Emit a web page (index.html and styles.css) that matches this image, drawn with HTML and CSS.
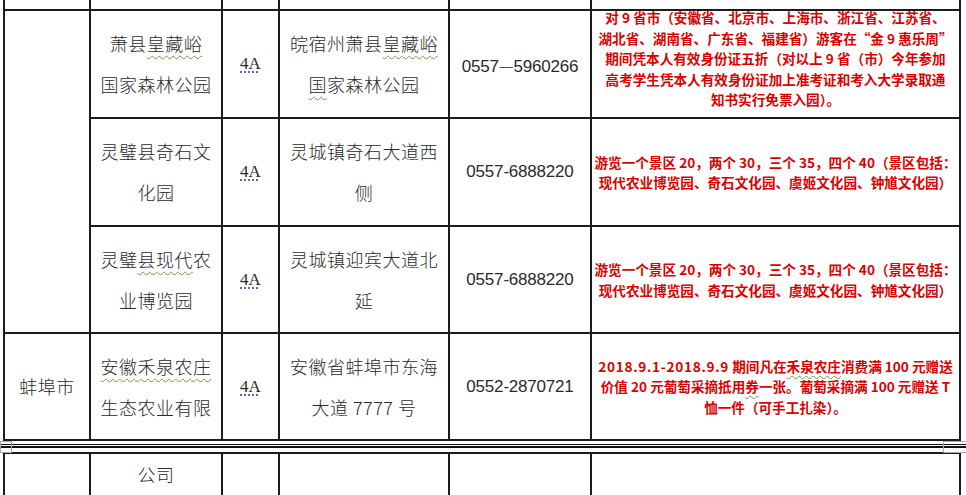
FILE: index.html
```html
<!DOCTYPE html>
<html lang="zh-CN">
<head>
<meta charset="utf-8">
<title>景区优惠表</title>
<link rel="stylesheet" href="styles.css">
</head>
<body>
<table class="grid top">
  <colgroup>
    <col class="c1"><col class="c2"><col class="c3"><col class="c4"><col class="c5"><col class="c6">
  </colgroup>
  <tr class="r0"><td></td><td></td><td></td><td></td><td></td><td></td></tr>
  <tr class="r1">
    <td class="city" rowspan="3"></td>
    <td class="name">萧县<span class="sp">皇藏峪</span><br>国家森林公园</td>
    <td class="lvl"><span class="dot">4A</span></td>
    <td class="name">皖宿州萧县<span class="sp">皇藏峪</span><br><span class="sp">国</span>家森林公园</td>
    <td class="tel">0557<span class="dash">—</span>5960266</td>
    <td class="note"><div class="lift">对 9 省市（安徽省、北京市、上海市、浙江省、江苏省、<br>湖北省、湖南省、广东省、福建省）游客在“金 9 惠乐周”<br>期间凭本人有效身份证五折（对以上 9 省（市）今年参加<br>高考学生凭本人有效身份证加上准考证和考入大学录取通<br>知书实行免票入园）。</div></td>
  </tr>
  <tr class="r2">
    <td class="name">灵璧县奇石文<br>化园</td>
    <td class="lvl"><span class="dot">4A</span></td>
    <td class="name">灵城镇奇石大道西<br>侧</td>
    <td class="tel">0557-6888220</td>
    <td class="note">游览一个景区 20，两个 30，三个 35，四个 40（景区包括：<br>现代农业博览园、奇石文化园、虞姬文化园、钟馗文化园）</td>
  </tr>
  <tr class="r3">
    <td class="name">灵璧<span class="sp">县现代</span>农<br>业博览园</td>
    <td class="lvl"><span class="dot">4A</span></td>
    <td class="name">灵城镇迎宾大道北<br>延</td>
    <td class="tel">0557-6888220</td>
    <td class="note">游览一个景区 20，两个 30，三个 35，四个 40（景区包括：<br>现代农业博览园、奇石文化园、虞姬文化园、钟馗文化园）</td>
  </tr>
  <tr class="r4">
    <td class="city">蚌埠市</td>
    <td class="name"><span class="sp">安徽禾泉农庄</span><br>生态农业有限</td>
    <td class="lvl"><span class="dot">4A</span></td>
    <td class="name">安徽省蚌埠市东海<br>大道 7777 号</td>
    <td class="tel">0552-2870721</td>
    <td class="note"><span class="date">2018.9.1-2018.9.9</span> 期间凡在<span class="sp">禾泉农庄</span>消费满 100 元赠送<br>价值 20 元葡萄采摘抵用<span class="sp">券</span>一张。葡萄采摘满 100 元赠送 T<br>恤一件（可手工扎染）。</td>
  </tr>
</table>
<div class="pagebreak"><div class="thick"></div></div>
<table class="grid bottom">
  <colgroup>
    <col class="c1"><col class="c2"><col class="c3"><col class="c4"><col class="c5"><col class="c6">
  </colgroup>
  <tr class="rb">
    <td></td>
    <td class="name cont">公司</td>
    <td></td><td></td><td></td><td></td>
  </tr>
</table>
<div class="handle handle-left"></div>
<div class="handle handle-right"></div>
</body>
</html>
```

FILE: styles.css
```css
html, body {
  margin: 0;
  padding: 0;
  background: #fff;
  overflow: hidden;
  height: 495px;
}

body {
  font-family: "Noto Sans CJK SC", sans-serif;
  color: #2a2a2a;
}

.grid {
  border-collapse: collapse;
  table-layout: fixed;
  width: 958px;
  margin-left: 3px;
}

.grid td {
  border: 2px solid #1c1c1c;
  padding: 0;
  text-align: center;
  vertical-align: middle;
  overflow: visible;
}

.c1 { width: 86px; }
.c2 { width: 132px; }
.c3 { width: 57px; }
.c4 { width: 170px; }
.c5 { width: 142px; }
.c6 { width: 369px; }

.r0 { height: 10px; }
.r0 td { border-top: none; }
.r1 { height: 108px; }
.r2 { height: 108px; }
.r3 { height: 107px; }
.r4 { height: 107px; }

.name,
.city {
  font-size: 18px;
  letter-spacing: 0.5px;
  line-height: 41px;
  font-weight: 300;
}

.lvl {
  font-family: "Liberation Serif", serif;
  font-size: 17px;
}

.dot {
  text-decoration-line: underline;
  text-decoration-style: dotted;
  text-decoration-color: #3c4f9a;
  text-underline-offset: 3px;
}

.sp {
  text-decoration-line: underline;
  text-decoration-style: wavy;
  text-decoration-color: #6f9c4f;
  text-decoration-thickness: 1px;
  text-underline-offset: 4px;
}

.tel {
  font-family: "Liberation Sans", sans-serif;
  font-size: 17px;
  letter-spacing: -0.2px;
}

.dash {
  font-family: "Noto Sans CJK SC", sans-serif;
  font-weight: 300;
}

.note {
  color: #dc0000;
  font-weight: 700;
  font-size: 13.6px;
  line-height: 20.5px;
  letter-spacing: 0;
}

.note .sp {
  text-underline-offset: 3px;
}

.lift {
  margin-top: -11px;
}

.date {
  letter-spacing: 0.7px;
}

.pagebreak {
  height: 11px;
  box-sizing: border-box;
  padding-top: 3px;
}

.pagebreak::before {
  content: "";
  display: block;
  height: 1px;
  background: #111;
}

.thick {
  margin-top: 1px;
  height: 2px;
  background: #111;
}

.rb { height: 42px; }

.grid td.cont {
  vertical-align: top;
}

.handle {
  position: absolute;
  top: 441px;
  height: 12px;
  box-sizing: border-box;
  border: 1px solid #a8a8a8;
}

.handle-left {
  left: 0;
  width: 12px;
}

.handle-right {
  left: 943px;
  width: 30px;
}
```
